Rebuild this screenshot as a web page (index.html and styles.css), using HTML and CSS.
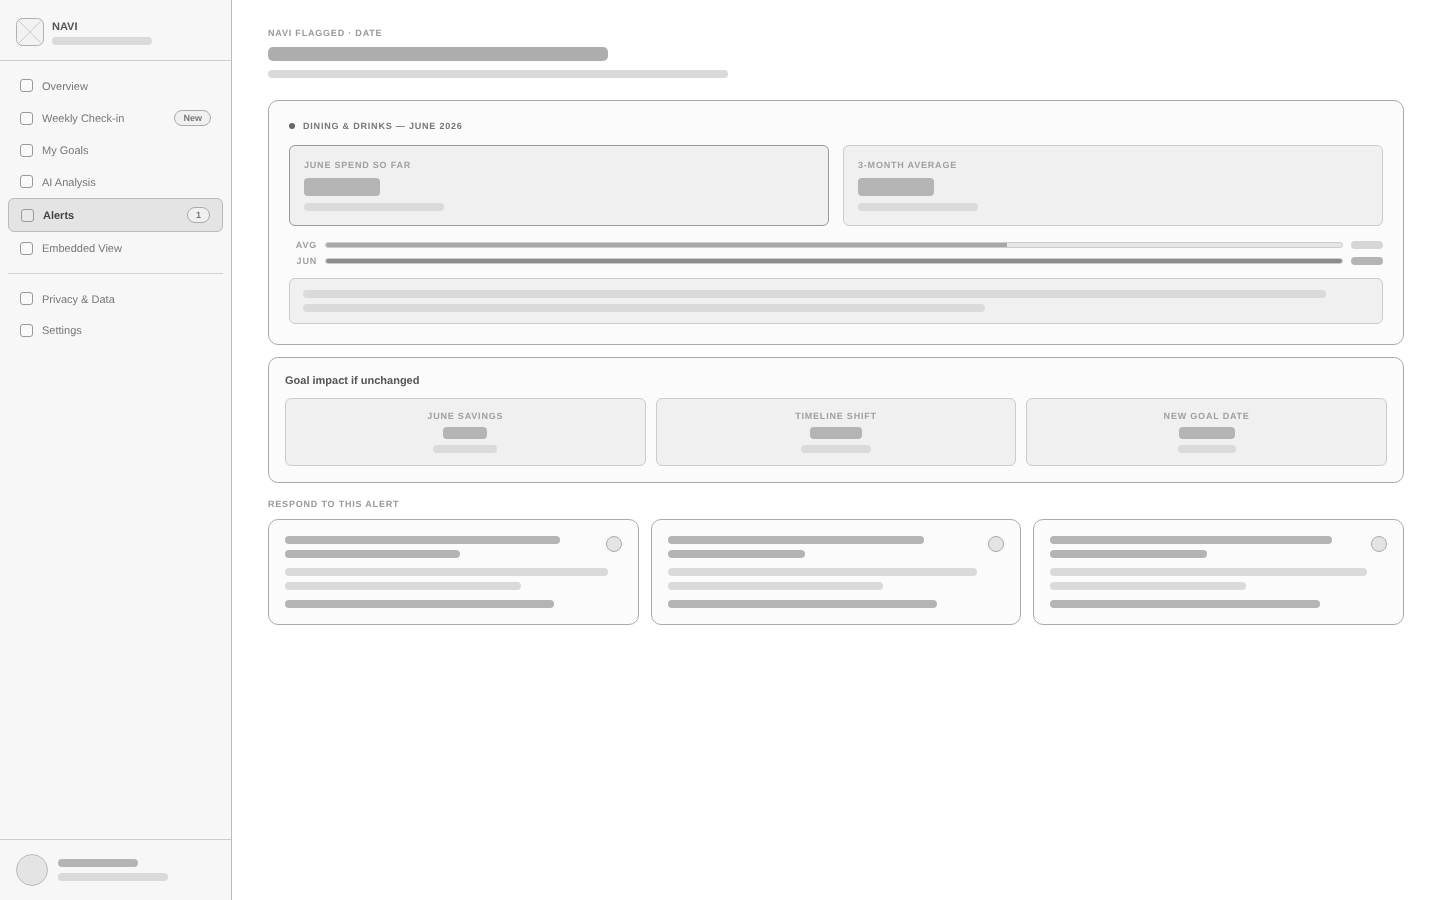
FILE: index.html
```html
<!DOCTYPE html>
<html lang="en">
<head>
<meta charset="utf-8">
<title>NAVI Alerts</title>
<link rel="stylesheet" href="styles.css">
</head>
<body>
<div class="app">
  <aside class="sidebar">
    <header class="brand">
      <svg class="logo" viewBox="0 0 28 28" width="28" height="28" aria-hidden="true">
        <rect x="0.5" y="0.5" width="27" height="27" rx="6" fill="#f2f2f2" stroke="#b0b0b0"/>
        <path d="M2 2L26 26M26 2L2 26" stroke="#c0c0c0" stroke-width="0.8" fill="none"/>
      </svg>
      <div class="brand-text">
        <div class="brand-name">NAVI</div>
        <div class="sk sk-light brand-sub"></div>
      </div>
    </header>
    <nav class="nav">
      <a class="nav-item"><span class="nav-icon"></span><span class="nav-label">Overview</span></a>
      <a class="nav-item"><span class="nav-icon"></span><span class="nav-label">Weekly Check-in</span><span class="badge">New</span></a>
      <a class="nav-item"><span class="nav-icon"></span><span class="nav-label">My Goals</span></a>
      <a class="nav-item"><span class="nav-icon"></span><span class="nav-label">AI Analysis</span></a>
      <a class="nav-item active"><span class="nav-icon"></span><span class="nav-label">Alerts</span><span class="badge badge-count">1</span></a>
      <a class="nav-item"><span class="nav-icon"></span><span class="nav-label">Embedded View</span></a>
      <div class="nav-divider"></div>
      <a class="nav-item"><span class="nav-icon"></span><span class="nav-label">Privacy &amp; Data</span></a>
      <a class="nav-item"><span class="nav-icon"></span><span class="nav-label">Settings</span></a>
    </nav>
    <footer class="user">
      <div class="avatar"></div>
      <div class="user-lines">
        <div class="sk sk-dark user-name"></div>
        <div class="sk sk-light user-mail"></div>
      </div>
    </footer>
  </aside>

  <main class="main">
    <div class="eyebrow">NAVI FLAGGED · DATE</div>
    <div class="page-title"></div>
    <div class="sk sk-light page-sub"></div>

    <section class="card card-alert">
      <div class="alert-head"><span class="dot"></span><span>DINING &amp; DRINKS — JUNE 2026</span></div>
      <div class="stats">
        <div class="stat stat-hot">
          <div class="stat-label">JUNE SPEND SO FAR</div>
          <div class="sk-value"></div>
          <div class="sk sk-light stat-sub" style="width:140px"></div>
        </div>
        <div class="stat">
          <div class="stat-label">3-MONTH AVERAGE</div>
          <div class="sk-value"></div>
          <div class="sk sk-light stat-sub" style="width:120px"></div>
        </div>
      </div>
      <div class="bars">
        <div class="bar-row">
          <span class="bar-label">AVG</span>
          <div class="track"><div class="fill" style="width:67%"></div></div>
          <span class="bar-val"></span>
        </div>
        <div class="bar-row">
          <span class="bar-label">JUN</span>
          <div class="track"><div class="fill fill-hot" style="width:100%"></div></div>
          <span class="bar-val bar-val-hot"></span>
        </div>
      </div>
      <div class="note">
        <div class="sk sk-light" style="width:96%"></div>
        <div class="sk sk-light" style="width:64%"></div>
      </div>
    </section>

    <section class="card card-impact">
      <h2 class="impact-title">Goal impact if unchanged</h2>
      <div class="tiles">
        <div class="tile">
          <div class="stat-label">JUNE SAVINGS</div>
          <div class="tile-value" style="width:44px"></div>
          <div class="sk sk-light" style="width:64px"></div>
        </div>
        <div class="tile">
          <div class="stat-label">TIMELINE SHIFT</div>
          <div class="tile-value" style="width:52px"></div>
          <div class="sk sk-light" style="width:70px"></div>
        </div>
        <div class="tile">
          <div class="stat-label">NEW GOAL DATE</div>
          <div class="tile-value" style="width:56px"></div>
          <div class="sk sk-light" style="width:58px"></div>
        </div>
      </div>
    </section>

    <div class="eyebrow respond-label">RESPOND TO THIS ALERT</div>
    <section class="options">
      <article class="card option">
        <div class="option-top">
          <div class="option-title">
            <div class="sk sk-dark" style="width:275px"></div>
            <div class="sk sk-dark" style="width:175px"></div>
          </div>
          <span class="radio"></span>
        </div>
        <div class="option-desc">
          <div class="sk sk-light" style="width:323px"></div>
          <div class="sk sk-light" style="width:236px"></div>
        </div>
        <div class="sk sk-dark option-foot" style="width:269px"></div>
      </article>
      <article class="card option">
        <div class="option-top">
          <div class="option-title">
            <div class="sk sk-dark" style="width:256px"></div>
            <div class="sk sk-dark" style="width:137px"></div>
          </div>
          <span class="radio"></span>
        </div>
        <div class="option-desc">
          <div class="sk sk-light" style="width:309px"></div>
          <div class="sk sk-light" style="width:215px"></div>
        </div>
        <div class="sk sk-dark option-foot" style="width:269px"></div>
      </article>
      <article class="card option">
        <div class="option-top">
          <div class="option-title">
            <div class="sk sk-dark" style="width:282px"></div>
            <div class="sk sk-dark" style="width:157px"></div>
          </div>
          <span class="radio"></span>
        </div>
        <div class="option-desc">
          <div class="sk sk-light" style="width:317px"></div>
          <div class="sk sk-light" style="width:196px"></div>
        </div>
        <div class="sk sk-dark option-foot" style="width:270px"></div>
      </article>
    </section>
  </main>
</div>
</body>
</html>
```
FILE: styles.css
```css
* { box-sizing: border-box; }
html, body { margin: 0; height: 100%; }
body {
  font-family: "Liberation Sans", Arial, sans-serif;
  text-rendering: geometricPrecision;
  background: #fff;
  color: #555;
  overflow: hidden;
}
.app { display: flex; height: 900px; will-change: transform; }

/* skeleton bars */
.sk { height: 8px; border-radius: 4px; }
.sk-light { background: #dadada; }
.sk-dark { background: #b4b4b4; }

/* sidebar */
.sidebar {
  width: 232px;
  flex: none;
  display: flex;
  flex-direction: column;
  background: #f7f7f7;
  border-right: 1px solid #bbb;
}
.brand {
  display: flex;
  align-items: center;
  gap: 8px;
  height: 61px;
  padding: 4px 16px 0;
  border-bottom: 1px solid #ccc;
}
.logo { flex: none; display: block; }
.brand-text { display: flex; flex-direction: column; gap: 2px; }
.brand-name { font-size: 11px; line-height: 15px; font-weight: 700; color: #555; }
.brand-sub { width: 100px; }

.nav {
  flex: 1;
  display: flex;
  flex-direction: column;
  gap: 1px;
  padding: 9.5px 8px 0;
}
.nav-item {
  display: flex;
  align-items: center;
  gap: 9px;
  padding: 7px 12px;
  font-size: 11px;
  line-height: 14.5px;
  color: #777;
  border-radius: 6px;
}
.nav-icon {
  width: 13px;
  height: 13px;
  flex: none;
  border: 1px solid #999;
  border-radius: 3px;
  background: #fafafa;
}
.nav-label { flex: 1; padding-top: 2px; }
.nav-item.active {
  background: #e4e4e4;
  border: 1px solid #bbb;
  color: #444;
  font-weight: 700;
}
.active .nav-icon { background: #e8e8e8; }
.badge {
  height: 16px;
  margin: 1px 0;
  padding: 0 8px;
  border: 1px solid #aaa;
  border-radius: 8px;
  background: #f0f0f0;
  font-size: 9px;
  line-height: 14px;
  font-weight: 700;
  color: #777;
}
.badge-count { width: 23px; padding: 0; text-align: center; }
.nav-divider { height: 1px; margin: 8px 0 9px; background: #d4d4d4; }

.user {
  display: flex;
  align-items: center;
  gap: 10px;
  height: 61px;
  padding: 0 16px;
  border-top: 1px solid #ccc;
}
.avatar {
  width: 32px;
  height: 32px;
  border-radius: 50%;
  background: #e4e4e4;
  border: 1px solid #bbb;
}
.user-lines { display: flex; flex-direction: column; gap: 6px; }
.user-name { width: 80px; }
.user-mail { width: 110px; }

/* main */
.main { flex: 1; min-width: 0; padding: 26px 36px 0; }
.eyebrow {
  font-size: 9px;
  line-height: 14px;
  font-weight: 700;
  letter-spacing: 0.8px;
  color: #999;
}
.page-title {
  width: 340px;
  height: 14px;
  margin-top: 7px;
  border-radius: 5px;
  background: #adadad;
}
.page-sub { width: 460px; margin-top: 9px; }

.card {
  background: #fbfbfb;
  border: 1px solid #aaa;
  border-radius: 10px;
}
.card-alert { margin-top: 22px; padding: 19px 20px 20px; }
.alert-head {
  display: flex;
  align-items: center;
  gap: 8px;
  font-size: 9px;
  line-height: 12px;
  font-weight: 700;
  letter-spacing: 0.8px;
  color: #777;
}
.dot { width: 6px; height: 6px; border-radius: 50%; background: #666; }

.stats { display: grid; grid-template-columns: 1fr 1fr; gap: 14px; margin-top: 13px; }
.stat {
  padding: 13px 14px 14px;
  background: #f0f0f0;
  border: 1px solid #ccc;
  border-radius: 6px;
}
.stat-hot { border-color: #999; }
.stat-label {
  font-size: 9px;
  line-height: 12px;
  font-weight: 700;
  letter-spacing: 0.8px;
  color: #a0a0a0;
}
.sk-value {
  width: 76px;
  height: 18px;
  margin-top: 7px;
  border-radius: 4px;
  background: #b4b4b4;
}
.stat-sub { margin-top: 7px; }

.bars { display: flex; flex-direction: column; gap: 8px; margin-top: 15px; }
.bar-row { display: flex; align-items: center; gap: 8px; height: 8px; }
.bar-label {
  width: 28px;
  flex: none;
  text-align: right;
  font-size: 9px;
  line-height: 8px;
  font-weight: 700;
  letter-spacing: 0.8px;
  color: #a0a0a0;
}
.track {
  flex: 1;
  height: 6px;
  border: 1px solid #ccc;
  border-radius: 3px;
  background: #e6e6e6;
  overflow: hidden;
}
.fill { height: 100%; background: #a8a8a8; }
.fill-hot { background: #8c8c8c; }
.bar-val { width: 32px; height: 8px; flex: none; border-radius: 4px; background: #d6d6d6; }
.bar-val-hot { background: #b4b4b4; }

.note {
  display: flex;
  flex-direction: column;
  gap: 6px;
  margin-top: 13px;
  padding: 11px 13px;
  background: #f0f0f0;
  border: 1px solid #ccc;
  border-radius: 6px;
}

.card-impact { margin-top: 12px; padding: 16px; }
.impact-title {
  margin: 0;
  font-size: 11px;
  line-height: 14px;
  font-weight: 700;
  color: #555;
}
.tiles { display: grid; grid-template-columns: repeat(3, 1fr); gap: 10px; margin-top: 10px; }
.tile {
  display: flex;
  flex-direction: column;
  align-items: center;
  padding: 11px 12px 12px;
  background: #f0f0f0;
  border: 1px solid #ccc;
  border-radius: 6px;
}
.tile-value {
  height: 12px;
  margin: 5px 0 6px;
  border-radius: 4px;
  background: #b4b4b4;
}

.respond-label { margin-top: 14px; }
.options { display: grid; grid-template-columns: repeat(3, 1fr); gap: 12px; margin-top: 8px; }
.option { padding: 16px; }
.option-top { display: flex; justify-content: space-between; align-items: flex-start; }
.option-title { display: flex; flex-direction: column; gap: 6px; }
.radio {
  width: 16px;
  height: 16px;
  flex: none;
  border-radius: 50%;
  background: #e4e4e4;
  border: 1px solid #aaa;
}
.option-desc { display: flex; flex-direction: column; gap: 6px; margin-top: 10px; }
.option-foot { margin-top: 10px; }
```
